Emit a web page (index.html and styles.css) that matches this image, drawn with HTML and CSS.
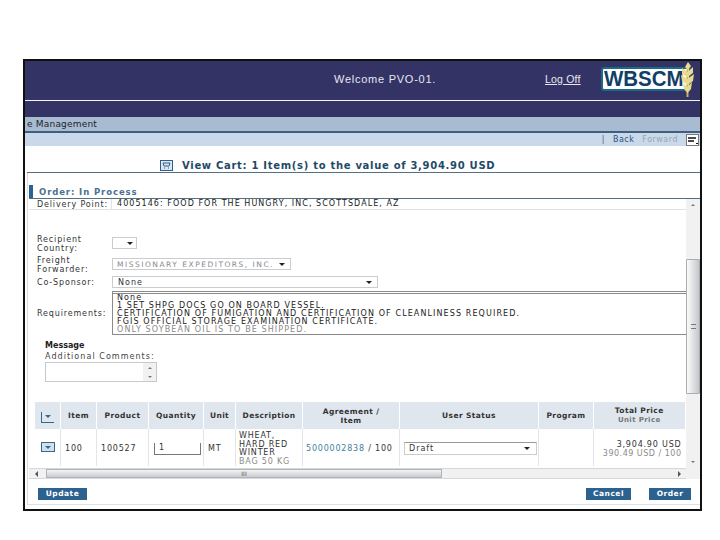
FILE: index.html
```html
<!DOCTYPE html>
<html lang="en">
<head>
    <meta charset="UTF-8">
    <title>View Cart</title>
    <link rel="stylesheet" href="styles.css">
</head>
<body>

<div class="frame">
    <div class="top-band">
        <div class="welcome">Welcome PVO-01.</div>
        <div class="logoff">Log Off</div>
        <div class="logo">
            <span class="logo-text">WBSCM</span>
            <svg class="wheat" width="13" height="36" viewBox="0 0 13 36">
                <path d="M6.5 35 L6.5 3" stroke="#c9b45a" stroke-width="2" fill="none"/>
                <path d="M7 0 L10 4 L7 8 L4 5 Z M1 6 L6.5 10 L6.5 15 L1 12 Z M12 5 L12 11 L6.5 15 L6.5 10 Z M0 13 L6.5 17 L6.5 23 L1 19 Z M13 12 L12 19 L6.5 23 L6.5 17 Z M2 21 L6.5 25 L6.5 31 L3 27 Z M11 20 L10 27 L6.5 31 L6.5 25 Z" fill="#ecd98b"/>
            </svg>
        </div>
    </div>
    <div class="nav-band"></div>
    <div class="menu-band">e Management</div>
    <div class="tool-band">
        <span class="sep">|</span>
        <span class="back">Back</span>
        <span class="forward">Forward</span>
        <svg class="tool-icon" width="13" height="12" viewBox="0 0 13 12">
            <rect x="0.5" y="0.5" width="12" height="11" fill="#fff" stroke="#777"/>
            <path d="M2 4 H10 M2 7 H8" stroke="#111" stroke-width="1.4"/>
            <path d="M10 9 H12 V10 H10 Z" fill="#111"/>
        </svg>
    </div>

    <div class="title-row">
        <svg class="cart-icon" width="13" height="11" viewBox="0 0 13 11">
            <rect x="0.5" y="0.5" width="12" height="10" fill="#dbe6f2" stroke="#2f5f86"/>
            <path d="M3 3 H10 L9 6 H4 Z" fill="none" stroke="#2f5f86"/>
            <path d="M4 8 H5 M8 8 H9" stroke="#2f5f86"/>
        </svg>
        <span>View Cart: 1 Item(s) to the value of 3,904.90 USD</span>
    </div>

    <div class="body-area">
        <h2 class="order-head">Order: In Process</h2>

        <div class="scroll-pane">
            <div class="scroll-main">
                <div class="scroll-content">
                    <div class="delivery-row">
                        <div class="label">Delivery Point:</div>
                        <div class="delivery-value">4005146: FOOD FOR THE HUNGRY, INC, SCOTTSDALE, AZ</div>
                    </div>

                    <div class="field-row country-row">
                        <div class="label">Recipient Country:</div>
                        <div class="select select-country"><i class="arrow"></i></div>
                    </div>
                    <div class="field-row freight-row">
                        <div class="label">Freight Forwarder:</div>
                        <div class="select select-freight"><span class="faint">MISSIONARY EXPEDITORS, INC.</span><i class="arrow"></i></div>
                    </div>
                    <div class="field-row sponsor-row">
                        <div class="label">Co-Sponsor:</div>
                        <div class="select select-sponsor"><span>None</span><i class="arrow"></i></div>
                    </div>
                    <div class="field-row req-row">
                        <div class="label">Requirements:</div>
                        <div class="req-box">
                            None<br>
                            1 SET SHPG DOCS GO ON BOARD VESSEL.<br>
                            CERTIFICATION OF FUMIGATION AND CERTIFICATION OF CLEANLINESS REQUIRED.<br>
                            FGIS OFFICIAL STORAGE EXAMINATION CERTIFICATE.<br>
                            <span class="faint">ONLY SOYBEAN OIL IS TO BE SHIPPED.</span>
                        </div>
                    </div>

                    <div class="message">
                        <h3>Message</h3>
                        <div class="comments-label">Additional Comments:</div>
                        <div class="comments-box">
                            <div class="comments-bar"><i class="tri-up"></i><i class="tri-down"></i></div>
                        </div>
                    </div>

                    <table class="cart-table">
                        <thead>
                            <tr>
                                <th class="col-arrow"><span class="corner-icon"><i></i></span></th>
                                <th class="col-item">Item</th>
                                <th class="col-product">Product</th>
                                <th class="col-qty">Quantity</th>
                                <th class="col-unit">Unit</th>
                                <th class="col-desc">Description</th>
                                <th class="col-agree">Agreement /<br>Item</th>
                                <th class="col-status">User Status</th>
                                <th class="col-program">Program</th>
                                <th class="col-price">Total Price<br><span class="sub-head">Unit Price</span></th>
                            </tr>
                        </thead>
                        <tbody>
                            <tr>
                                <td class="arrow-cell"><span class="row-icon"><i></i></span></td>
                                <td>100</td>
                                <td>100527</td>
                                <td class="qty-cell"><div class="qty-input">1</div></td>
                                <td>MT</td>
                                <td class="desc">WHEAT,<br>HARD RED<br>WINTER<br><span class="faint">BAG 50 KG</span></td>
                                <td class="agree"><span class="link">5000002838</span> / 100</td>
                                <td class="status-cell"><div class="select select-status"><span>Draft</span><i class="arrow"></i></div></td>
                                <td></td>
                                <td class="price">3,904.90 USD<br><span class="unit-price">390.49 USD / 100</span></td>
                            </tr>
                        </tbody>
                    </table>
                </div>
                <div class="hscroll">
                    <i class="tri-left"></i>
                    <div class="hthumb"><span>III</span></div>
                    <i class="tri-right"></i>
                </div>
            </div>
            <div class="vscroll">
                <i class="tri-up"></i>
                <div class="vthumb"><span></span></div>
                <i class="tri-down"></i>
            </div>
        </div>

        <div class="button-row">
            <div class="btn">Update</div>
            <div class="btn btn-cancel">Cancel</div>
            <div class="btn">Order</div>
        </div>
    </div>
</div>

</body>
</html>
```

FILE: styles.css
```css
/* Page and outer frame */
body {
    margin: 0;
    background-color: #fff;
    font-family: "DejaVu Sans", Verdana, sans-serif;
    font-size: 8px;
    color: #222;
}

.frame {
    width: 675px;
    height: 448px;
    margin: 59px 0 0 23px;
    border: 2px solid #111;
    display: flex;
    flex-direction: column;
    overflow: hidden;
}

/* Header bands */
.top-band {
    height: 39px;
    flex: none;
    background-color: #333366;
    border-bottom: 1px solid #f4f4f8;
    color: #e8e8f0;
    position: relative;
    display: flex;
    align-items: center;
    font-family: "Liberation Sans", Arial, sans-serif;
    font-size: 11px;
}

.welcome {
    margin-left: 309px;
    width: 211px;
    letter-spacing: 0.75px;
    margin-top: -3px;
}

.logoff {
    text-decoration: underline;
    font-size: 10.5px;
    letter-spacing: 0.2px;
    margin-top: -3px;
}

.logo {
    position: absolute;
    left: 576px;
    top: 6px;
    width: 90px;
    height: 24px;
    background-color: #fff;
    border: 2px solid #1b6a86;
    border-radius: 3px;
    box-sizing: border-box;
    line-height: 20px;
}

.logo-text {
    display: block;
    margin-left: 1px;
    font-family: "Liberation Sans", Arial, sans-serif;
    font-weight: bold;
    font-size: 22px;
    color: #123f68;
    transform: scaleX(0.93);
    transform-origin: left center;
}

.wheat {
    position: absolute;
    right: -5px;
    top: -7px;
}

.nav-band {
    height: 16px;
    flex: none;
    background-color: #333366;
}

.menu-band {
    height: 14px;
    flex: none;
    background-color: #a9bbd0;
    border-bottom: 2px solid #3d5f80;
    line-height: 14px;
    padding-left: 2px;
    font-size: 9px;
    letter-spacing: 0.2px;
    color: #1c2430;
}

.tool-band {
    height: 13px;
    flex: none;
    background-color: #c9d9ea;
    display: flex;
    justify-content: flex-end;
    align-items: center;
    padding-right: 1px;
    letter-spacing: 0.5px;
}

.tool-band .sep {
    color: #556;
    margin-right: 8px;
}

.back {
    color: #2f4f86;
    margin-right: 8px;
}

.forward {
    color: #9aa5b0;
    margin-right: 8px;
}

.title-row {
    height: 14px;
    flex: none;
    margin-left: 2px;
    border-bottom: 1px solid #54707f;
    display: flex;
    align-items: center;
    padding: 12px 0 0 133px;
    font-weight: bold;
    font-size: 10px;
    letter-spacing: 0.7px;
    color: #1e4a68;
}

.cart-icon {
    margin-right: 9px;
}

/* Order section */
.body-area {
    flex: 1;
    min-height: 0;
    margin-left: 2px;
    margin-bottom: 4px;
    border-left: 1px solid #d8dde2;
    border-bottom: 1px solid #dde2e6;
    display: flex;
    flex-direction: column;
}

.order-head {
    margin: 12px 0 0 1px;
    height: 13px;
    flex: none;
    border-left: 4px solid #2c6290;
    padding-left: 6px;
    font-size: 8.5px;
    letter-spacing: 0.9px;
    line-height: 15px;
    color: #4a6f92;
}

.scroll-pane {
    height: 280px;
    flex: none;
    display: flex;
    margin-left: 1px;
    border-top: 1px solid #54707f;
}

.scroll-main {
    flex: 1;
    min-width: 0;
    display: flex;
    flex-direction: column;
}

.scroll-content {
    flex: 1;
    min-height: 0;
    overflow: hidden;
}

.label {
    width: 82px;
    flex: none;
    padding-left: 8px;
    box-sizing: border-box;
    color: #333;
    line-height: 8.5px;
    letter-spacing: 0.85px;
}

.delivery-row {
    height: 10px;
    display: flex;
    border-bottom: 1px solid #dfe3e6;
}

.delivery-row .label {
    line-height: 11px;
}

.delivery-value {
    border-left: 1px solid #dfe3e6;
    padding-left: 5px;
    line-height: 10px;
    color: #222;
    letter-spacing: 1.05px;
}

.field-row {
    display: flex;
    align-items: center;
}

.country-row,
.freight-row {
    align-items: flex-start;
}

.country-row .select,
.freight-row .select {
    margin-top: 1px;
}

.country-row {
    margin-top: 26px;
}

.freight-row {
    margin-top: 4px;
}

.sponsor-row {
    margin-top: 2px;
}

.req-row {
    margin-top: 3px;
}

.sponsor-row .label,
.req-row .label {
    margin-top: 2px;
}

.faint {
    color: #8a8a8a;
}

/* Select boxes are drawn, they only show a value */
.select {
    height: 12px;
    box-sizing: border-box;
    border: 1px solid #c9cdd2;
    background-color: #fff;
    display: flex;
    align-items: center;
    justify-content: space-between;
    padding: 0 5px;
    color: #333;
    letter-spacing: 1px;
    margin-left: 1px;
}

.select-country {
    width: 25px;
    justify-content: flex-end;
    padding-right: 3px;
}

.select-freight {
    width: 179px;
    padding-left: 4px;
    white-space: nowrap;
}

.select-freight .faint {
    font-size: 7.5px;
    letter-spacing: 1.5px;
}

.select-sponsor {
    width: 266px;
}

.select-status {
    width: 133px;
    height: 13px;
    margin-left: 4px;
    border-top-color: #999;
    padding: 0 6px 0 4px;
}

.arrow {
    width: 0;
    height: 0;
    border-left: 3px solid transparent;
    border-right: 3px solid transparent;
    border-top: 3px solid #222;
}

.req-box {
    flex: 1;
    height: 44px;
    overflow: hidden;
    margin-left: 1px;
    box-sizing: border-box;
    border: 1px solid #8a8a8a;
    border-top: 3px double #8a8a8a;
    border-right: none;
    padding: 0 4px;
    line-height: 8px;
    letter-spacing: 1.1px;
    color: #222;
}

.message {
    padding: 6px 0 0 16px;
    height: 67px;
    box-sizing: border-box;
}

.message h3 {
    margin: 0;
    font-size: 8px;
    line-height: 10px;
    color: #222;
}

.comments-label {
    margin-top: 1px;
    line-height: 10px;
    letter-spacing: 1.05px;
    color: #444;
}

.comments-box {
    width: 112px;
    height: 20px;
    box-sizing: border-box;
    border: 1px solid #c6cace;
    display: flex;
    justify-content: flex-end;
}

.comments-bar {
    width: 13px;
    background-color: #f1f1f1;
    display: flex;
    flex-direction: column;
    justify-content: space-around;
    align-items: center;
}

/* Little scrollbar triangles */
.tri-up,
.tri-down {
    width: 0;
    height: 0;
    border-left: 2px solid transparent;
    border-right: 2px solid transparent;
}

.tri-up {
    border-bottom: 2px solid #777;
}

.tri-down {
    border-top: 2px solid #777;
}

.tri-left,
.tri-right {
    width: 0;
    height: 0;
    flex: none;
    border-top: 3px solid transparent;
    border-bottom: 3px solid transparent;
}

.tri-left {
    border-right: 3px solid #555;
    margin: 0 8px 0 6px;
}

.tri-right {
    border-left: 3px solid #555;
    margin: 0 5px 0 auto;
}

/* Cart table */
.cart-table {
    margin-left: 5px;
    width: 650px;
    border-collapse: collapse;
    table-layout: fixed;
}

.cart-table th {
    box-sizing: border-box;
    height: 27px;
    padding: 0;
    background-color: #dfe6ee;
    border-left: 1px solid #fff;
    font-weight: bold;
    font-size: 7.5px;
    letter-spacing: 0.4px;
    line-height: 9px;
    color: #333;
    text-align: center;
}

.cart-table td {
    box-sizing: border-box;
    height: 37px;
    padding: 2px 0 0 4px;
    border-left: 1px solid #e2e6ea;
    text-align: left;
    letter-spacing: 0.8px;
    color: #333;
}

.col-arrow { width: 26px; }
.col-item { width: 36px; }
.col-product { width: 52px; }
.col-qty { width: 55px; }
.col-unit { width: 32px; }
.col-desc { width: 67px; }
.col-agree { width: 97px; }
.col-status { width: 139px; }
.col-program { width: 55px; }
.col-price { width: 91px; }

.sub-head {
    color: #777;
    font-size: 7px;
}

.corner-icon {
    display: block;
    width: 13px;
    height: 11px;
    margin: 3px 0 0 6px;
    border-left: 1px solid #2f6a90;
    border-bottom: 1px solid #2f6a90;
    box-sizing: border-box;
    position: relative;
}

.row-icon {
    display: block;
    width: 14px;
    height: 10px;
    margin: -4px 0 0 2px;
    background-color: #d2deea;
    border: 1px solid #2f6a90;
    box-sizing: border-box;
    position: relative;
}

.corner-icon i,
.row-icon i {
    position: absolute;
    left: 3px;
    top: 3px;
    width: 0;
    height: 0;
    border-left: 3px solid transparent;
    border-right: 3px solid transparent;
    border-top: 3px solid #2f6a90;
}

.cart-table td.arrow-cell {
    border-left: none;
}

.cart-table td.qty-cell,
.cart-table td.status-cell {
    padding-left: 0;
}

.qty-input {
    width: 47px;
    height: 12px;
    box-sizing: border-box;
    margin-left: 5px;
    border-left: 1px solid #777;
    border-right: 1px solid #777;
    border-bottom: 1px solid #777;
    padding-left: 4px;
    line-height: 10px;
}

.cart-table td.desc {
    padding: 3px 0 0 3px;
    line-height: 8.5px;
    overflow: hidden;
    vertical-align: top;
}

.cart-table td.agree {
    padding-left: 3px;
    white-space: nowrap;
}

.link {
    color: #3d7fa0;
}

.cart-table td.price {
    text-align: right;
    line-height: 9px;
    white-space: nowrap;
    padding: 2px 3px 0 0;
}

.unit-price {
    color: #8a8a8a;
    letter-spacing: 0.5px;
}

/* Scroll bars */
.hscroll {
    height: 11px;
    flex: none;
    display: flex;
    align-items: center;
    background-color: #f1f1f1;
    border-top: 1px solid #d4d8dc;
    border-bottom: 1px solid #d4d8dc;
    box-sizing: border-box;
}

.hthumb {
    width: 396px;
    height: 9px;
    background: linear-gradient(#f4f4f4, #c8ccd0);
    border: 1px solid #b0b4b8;
    box-sizing: border-box;
    display: flex;
    align-items: center;
    justify-content: center;
    font-size: 6px;
    color: #555;
}

.vscroll {
    width: 14px;
    flex: none;
    background-color: #f1f1f1;
    display: flex;
    flex-direction: column;
    align-items: center;
}

.vscroll .tri-up {
    margin-top: 5px;
}

.vscroll .tri-down {
    margin-top: auto;
    margin-bottom: 16px;
}

.vthumb {
    width: 14px;
    height: 135px;
    margin-top: 53px;
    box-sizing: border-box;
    border: 1px solid #a9adb1;
    border-radius: 1px;
    background: linear-gradient(90deg, #fbfbfb, #c4c8cc);
    display: flex;
    align-items: center;
    justify-content: center;
}

.vthumb span {
    width: 5px;
    height: 5px;
    border-top: 1px solid #777;
    border-bottom: 1px solid #777;
    box-sizing: border-box;
}

/* Buttons */
.button-row {
    display: flex;
    padding: 9px 9px 0 10px;
}

.btn {
    height: 12px;
    width: 49px;
    background-color: #2c6290;
    color: #fff;
    font-weight: bold;
    font-size: 7.5px;
    letter-spacing: 0.5px;
    line-height: 12px;
    text-align: center;
}

.btn-cancel {
    width: 45px;
    margin-left: auto;
    margin-right: 18px;
}

.btn:last-child {
    width: 42px;
}
```
